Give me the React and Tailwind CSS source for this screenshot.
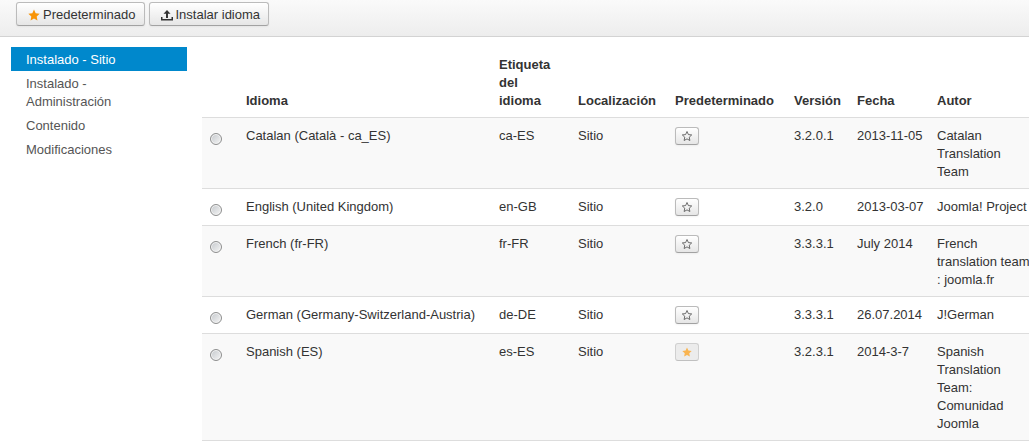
import React, { useState } from "react";

const STAR =
	"M8 0.8l2.2 4.9 5.3 0.6-3.9 3.6 1 5.3L8 12.6l-4.6 2.6 1-5.3L0.5 6.3l5.3-0.6z";

const languages = [
	{
		name: "Catalan (Català - ca_ES)",
		tag: "ca-ES",
		version: "3.2.0.1",
		date: "2013-11-05",
		author: "Catalan Translation Team",
	},
	{
		name: "English (United Kingdom)",
		tag: "en-GB",
		version: "3.2.0",
		date: "2013-03-07",
		author: "Joomla! Project",
	},
	{
		name: "French (fr-FR)",
		tag: "fr-FR",
		version: "3.3.3.1",
		date: "July 2014",
		author: "French translation team : joomla.fr",
	},
	{
		name: "German (Germany-Switzerland-Austria)",
		tag: "de-DE",
		version: "3.3.3.1",
		date: "26.07.2014",
		author: "J!German",
	},
	{
		name: "Spanish (ES)",
		tag: "es-ES",
		version: "3.2.3.1",
		date: "2014-3-7",
		author: "Spanish Translation Team: Comunidad Joomla",
		isDefault: true,
	},
];

const menu = [
	"Instalado - Sitio",
	"Instalado - Administración",
	"Contenido",
	"Modificaciones",
];

const StarIcon = ({ className, outline }) => (
	<svg viewBox="0 0 16 16" className={className} aria-hidden="true">
		<path
			d={STAR}
			fill={outline ? "none" : "currentColor"}
			stroke={outline ? "currentColor" : "none"}
			strokeWidth="1.2"
		/>
	</svg>
);

const UploadIcon = () => (
	<svg viewBox="0 0 12 11" className="w-3 h-[11px]" aria-hidden="true">
		<path
			d="M6 0l3.5 3.8H7V8H5V3.8H2.5zM0 7h1.5V9h9V7H12v3.5H0z"
			fill="#333"
		/>
	</svg>
);

const ToolbarButton = ({ icon, children }) => (
	<button
		type="button"
		className="h-6 pt-[2px] pl-[11px] pr-2 flex items-center gap-[3px] rounded-[3px] border border-[#bbb] border-b-[#a2a2a2] bg-linear-to-b from-white to-[#e6e6e6] shadow-xs"
	>
		{icon}
		{children}
	</button>
);

const App = () => {
	const [selected, setSelected] = useState(null);

	return (
		<div className="overflow-x-hidden bg-white text-[#333] text-[13px] leading-[18px] font-['Liberation_Sans',Arial,sans-serif]">
			<header className="flex gap-1 pl-4 pt-[2px] pb-[10px] border-b border-[#d3d3d3] bg-linear-to-b from-[#fafafa] to-[#ededed]">
				<ToolbarButton
					icon={<StarIcon className="w-3 h-3 text-[#f89406]" />}
				>
					Predeterminado
				</ToolbarButton>
				<ToolbarButton icon={<UploadIcon />}>Instalar idioma</ToolbarButton>
			</header>

			<div className="flex items-start gap-[15px] pl-[11px] pt-[10px]">
				<nav className="w-44 shrink-0">
					<ul>
						{menu.map((label, i) => (
							<li key={label}>
								<a
									href="#"
									className={
										i === 0
											? "block pt-1 pb-[2px] pl-[15px] pr-14 whitespace-nowrap bg-[#08c] text-white"
											: "block pt-1 pb-[2px] pl-[15px] pr-14 text-[#555]"
									}
								>
									{label}
								</a>
							</li>
						))}
					</ul>
				</nav>

				<main className="flex-1 min-w-0 -mr-3">
					<table className="w-full table-fixed border-separate border-spacing-0 text-left">
						<thead>
							<tr className="align-bottom [&>th]:px-2 [&>th]:pt-[9px] [&>th]:pb-[7px]">
								<th className="w-9" aria-label="Seleccionar" />
								<th>Idioma</th>
								<th className="w-[79px]">Etiqueta del idioma</th>
								<th className="w-[97px]">Localización</th>
								<th className="w-[119px]">Predeterminado</th>
								<th className="w-[63px]">Versión</th>
								<th className="w-20">Fecha</th>
								<th className="w-28">Autor</th>
							</tr>
						</thead>
						<tbody>
							{languages.map((lang) => (
								<tr
									key={lang.tag}
									className="align-top odd:bg-[#f9f9f9] [&>td]:h-[37px] [&>td]:px-2 [&>td]:pt-[9px] [&>td]:pb-[7px] [&>td]:border-t [&>td]:border-[#ddd] last:[&>td]:border-b"
								>
									<td>
										<input
											type="radio"
											name="cid"
											aria-label={lang.name}
											checked={selected === lang.tag}
											onChange={() => setSelected(lang.tag)}
											className="block appearance-none mt-[6px] w-3 h-3 rounded-full border border-[#8e8f8f] bg-linear-to-br from-[#c4c8cc] to-[#f6f6f6] shadow-[inset_0_0_0_1px_#f4f4f4] checked:bg-[#333]"
										/>
									</td>
									<td>{lang.name}</td>
									<td>{lang.tag}</td>
									<td>Sitio</td>
									<td>
										<button
											type="button"
											aria-label="Predeterminado"
											disabled={lang.isDefault}
											className="flex items-center justify-center w-6 h-[18px] rounded-[3px] border border-[#bbb] border-b-[#a2a2a2] bg-linear-to-b from-white to-[#e6e6e6] shadow-xs disabled:border-[#d0d0d0] disabled:border-b-[#c0c0c0] disabled:bg-none disabled:bg-[#ececec] disabled:shadow-none"
										>
											{lang.isDefault ? (
												<StarIcon className="w-[10px] h-[10px] text-[#f9b450]" />
											) : (
												<StarIcon
													outline
													className="w-[10px] h-[10px] text-[#444]"
												/>
											)}
										</button>
									</td>
									<td>{lang.version}</td>
									<td className="whitespace-nowrap">{lang.date}</td>
									<td>{lang.author}</td>
								</tr>
							))}
						</tbody>
					</table>
				</main>
			</div>
		</div>
	);
};

export default App;
